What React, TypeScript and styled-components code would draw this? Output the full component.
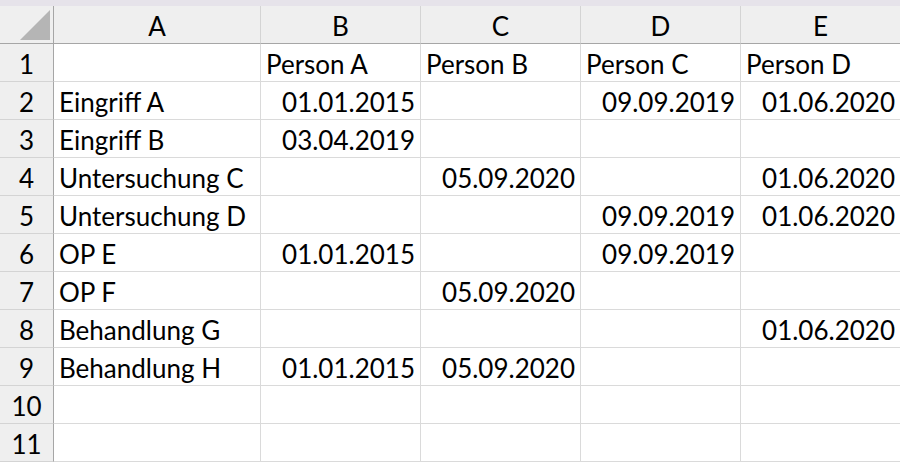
import React from "react";
import styled, { createGlobalStyle } from "styled-components";

const Global = createGlobalStyle`
  html, body { margin: 0; padding: 0; background: #ffffff; overflow: hidden; }
  body { font-family: Lato, "Liberation Sans", sans-serif; }
`;

const Page = styled.div`
  width: 900px;
  height: 462px;
  display: flex;
  flex-direction: column;
  overflow: hidden;
`;

const TopStrip = styled.div`
  height: 6px;
  flex: none;
  background: #e6e3ea;
`;

const Sheet = styled.div`
  display: grid;
  grid-template-columns: 54px 207px 160px 160px 160px 1fr;
  grid-auto-rows: 38px;
  font-family: Lato, "Liberation Sans", sans-serif;
  font-size: 26px;
  color: #000;
`;

const Corner = styled.div`
  background: #efefef;
  border-right: 1px solid #a6a6a6;
  border-bottom: 1px solid #a6a6a6;
  display: flex;
  align-items: flex-end;
  justify-content: flex-end;
  padding: 0 3px 3px 0;
`;

const ColHead = styled.div<{ $last?: boolean }>`
  background: #efefef;
  border-right: ${(p) => (p.$last ? "none" : "1px solid #d4d4d4")};
  border-bottom: 1px solid #a6a6a6;
  display: flex;
  align-items: center;
  justify-content: center;
  padding-top: 2px;
`;

const RowHead = styled.div`
  background: #efefef;
  border-right: 1px solid #a6a6a6;
  border-bottom: 1px solid #d4d4d4;
  display: flex;
  align-items: center;
  justify-content: center;
  padding-top: 2px;
`;

const Cell = styled.div<{ $right?: boolean; $last?: boolean }>`
  border-right: ${(p) => (p.$last ? "none" : "1px solid #dadada")};
  border-bottom: 1px solid #dadada;
  display: flex;
  align-items: center;
  justify-content: ${(p) => (p.$right ? "flex-end" : "flex-start")};
  padding: 2px 5px 0 5px;
  white-space: nowrap;
  overflow: visible;
`;

const cols = ["A", "B", "C", "D", "E"];

const rows: string[][] = [
  ["", "Person A", "Person B", "Person C", "Person D"],
  ["Eingriff A", "01.01.2015", "", "09.09.2019", "01.06.2020"],
  ["Eingriff B", "03.04.2019", "", "", ""],
  ["Untersuchung C", "", "05.09.2020", "", "01.06.2020"],
  ["Untersuchung D", "", "", "09.09.2019", "01.06.2020"],
  ["OP E", "01.01.2015", "", "09.09.2019", ""],
  ["OP F", "", "05.09.2020", "", ""],
  ["Behandlung G", "", "", "", "01.06.2020"],
  ["Behandlung H", "01.01.2015", "05.09.2020", "", ""],
  ["", "", "", "", ""],
  ["", "", "", "", ""],
];

const isDate = (s: string) => /^\d{2}\.\d{2}\.\d{4}$/.test(s);

export default function App() {
  return (
    <>
      <Global />
      <Page>
        <TopStrip />
        <Sheet>
          <Corner>
            <svg width="30" height="30" viewBox="0 0 30 30">
              <polygon points="30,0 30,30 0,30" fill="#b5b5b5" />
            </svg>
          </Corner>
          {cols.map((c, i) => (
            <ColHead key={c} $last={i === cols.length - 1}>
              {c}
            </ColHead>
          ))}
          {rows.map((r, ri) => (
            <React.Fragment key={ri}>
              <RowHead>{ri + 1}</RowHead>
              {r.map((v, ci) => (
                <Cell key={ci} $right={isDate(v)} $last={ci === r.length - 1}>
                  {v}
                </Cell>
              ))}
            </React.Fragment>
          ))}
        </Sheet>
      </Page>
    </>
  );
}
